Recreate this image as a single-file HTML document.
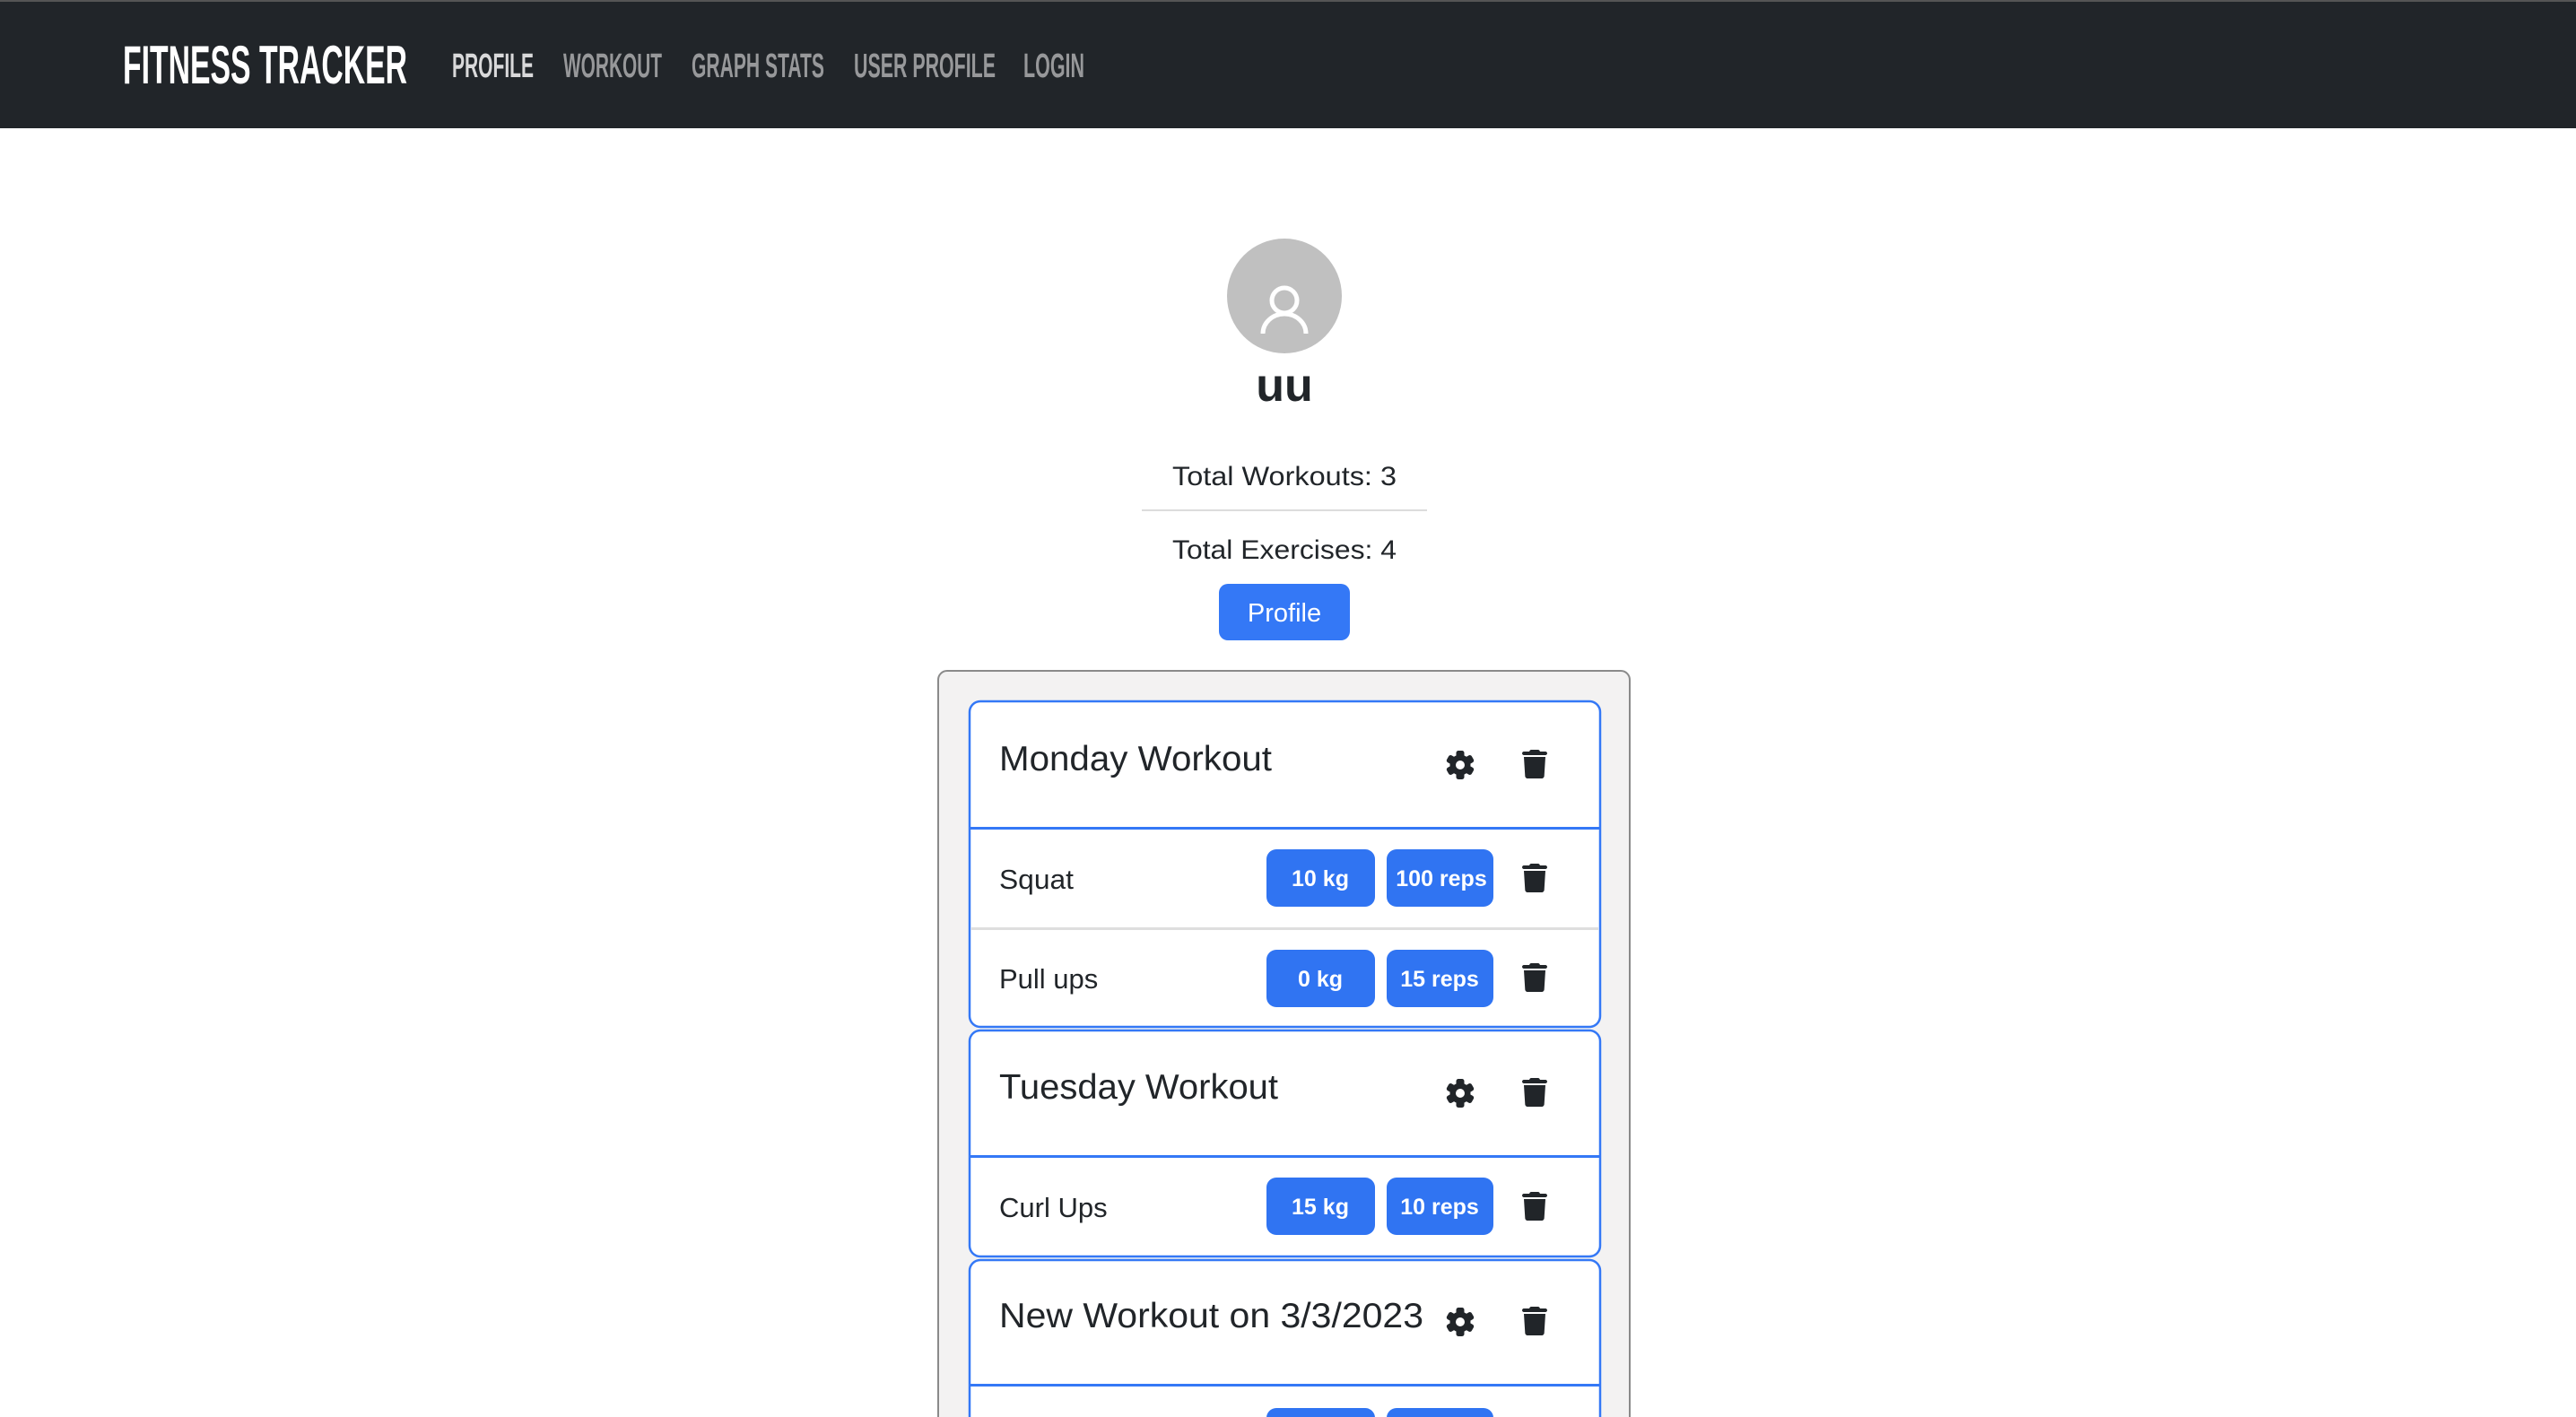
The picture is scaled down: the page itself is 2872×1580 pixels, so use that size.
<!DOCTYPE html>
<html><head><meta charset="utf-8"><style>
html,body{margin:0;padding:0;background:#fff;width:2872px;height:1580px;overflow:hidden}
svg{display:block}
text{font-family:"Liberation Sans",sans-serif}
</style></head><body>
<svg width="2872" height="1580" viewBox="0 0 2872 1580" xmlns="http://www.w3.org/2000/svg">
<defs>
<g id="trash"><path transform="scale(0.0625)" d="M135.2 17.7L128 32H32C14.3 32 0 46.3 0 64S14.3 96 32 96H416c17.7 0 32-14.3 32-32s-14.3-32-32-32H320l-7.2-14.3C307.4 6.8 296.3 0 284.2 0H163.8c-12.1 0-23.2 6.8-28.6 17.7zM416 128H32L53.2 467c1.6 25.3 22.6 45 47.9 45H346.9c25.3 0 46.3-19.7 47.9-45L416 128z" fill="#212529"/></g>
<g id="gear" fill="#212529">
<circle r="11.5"/>
<rect x="-4.5" y="-16" width="9" height="32" rx="2.5"/>
<rect x="-4.5" y="-16" width="9" height="32" rx="2.5" transform="rotate(60)"/>
<rect x="-4.5" y="-16" width="9" height="32" rx="2.5" transform="rotate(120)"/>
<circle r="5" fill="#fff"/>
</g>
</defs>
<rect x="0" y="0" width="2872" height="143" fill="#212529"/>
<rect x="0" y="0" width="2872" height="2" fill="#555"/>
<text x="137" y="93" font-size="60" font-weight="bold" fill="#fff" textLength="317" lengthAdjust="spacingAndGlyphs">FITNESS TRACKER</text>
<text x="504" y="86" font-size="38" font-weight="bold" fill="#d9d9da" textLength="91" lengthAdjust="spacingAndGlyphs">PROFILE</text>
<text x="628" y="86" font-size="38" font-weight="bold" fill="#97989a" textLength="110" lengthAdjust="spacingAndGlyphs">WORKOUT</text>
<text x="771" y="86" font-size="38" font-weight="bold" fill="#97989a" textLength="148" lengthAdjust="spacingAndGlyphs">GRAPH STATS</text>
<text x="952" y="86" font-size="38" font-weight="bold" fill="#97989a" textLength="158" lengthAdjust="spacingAndGlyphs">USER PROFILE</text>
<text x="1141" y="86" font-size="38" font-weight="bold" fill="#97989a" textLength="68" lengthAdjust="spacingAndGlyphs">LOGIN</text>
<circle cx="1432" cy="330" r="64" fill="#c0c0c0"/>
<circle cx="1432" cy="335" r="14" fill="none" stroke="#fff" stroke-width="5"/>
<path d="M1408 372 A24 22 0 0 1 1456 372" fill="none" stroke="#fff" stroke-width="5"/>
<text x="1432" y="447" font-size="52" font-weight="bold" fill="#212529" text-anchor="middle">uu</text>
<text x="1432" y="541" font-size="30" fill="#212529" text-anchor="middle" textLength="250" lengthAdjust="spacingAndGlyphs">Total Workouts: 3</text>
<rect x="1273" y="568" width="318" height="2" fill="#dcdcdc"/>
<text x="1432" y="623" font-size="30" fill="#212529" text-anchor="middle" textLength="250" lengthAdjust="spacingAndGlyphs">Total Exercises: 4</text>
<rect x="1359" y="651" width="146" height="63" rx="10" fill="#3478f6"/>
<text x="1432" y="693" font-size="29" fill="#fff" text-anchor="middle">Profile</text>
<rect x="1046" y="748" width="771" height="900" rx="10" fill="#f3f2f2" stroke="#8a8a8a" stroke-width="2"/>
<rect x="1081" y="782" width="703" height="363" rx="12" fill="#fff" stroke="#3478f6" stroke-width="2.5"/>
<rect x="1081" y="922" width="703" height="3" fill="#3478f6"/>
<text x="1114" y="859" font-size="39" fill="#212529" textLength="304" lengthAdjust="spacingAndGlyphs">Monday Workout</text>
<use href="#gear" x="1628" y="853"/>
<use href="#trash" x="1697" y="836"/>
<text x="1114" y="991" font-size="31" fill="#212529" textLength="83" lengthAdjust="spacingAndGlyphs">Squat</text>
<rect x="1412" y="947" width="121" height="64" rx="11" fill="#3074f2"/>
<rect x="1546" y="947" width="119" height="64" rx="11" fill="#3074f2"/>
<text x="1472" y="988" font-size="25" font-weight="bold" fill="#fff" text-anchor="middle">10 kg</text>
<text x="1607" y="988" font-size="25" font-weight="bold" fill="#fff" text-anchor="middle">100 reps</text>
<use href="#trash" x="1697" y="963"/>
<rect x="1083" y="1034" width="699" height="3" fill="#dedede"/>
<text x="1114" y="1102" font-size="31" fill="#212529">Pull ups</text>
<rect x="1412" y="1059" width="121" height="64" rx="11" fill="#3074f2"/>
<rect x="1546" y="1059" width="119" height="64" rx="11" fill="#3074f2"/>
<text x="1472" y="1100" font-size="25" font-weight="bold" fill="#fff" text-anchor="middle">0 kg</text>
<text x="1605" y="1100" font-size="25" font-weight="bold" fill="#fff" text-anchor="middle">15 reps</text>
<use href="#trash" x="1697" y="1074"/>
<rect x="1081" y="1149" width="703" height="252" rx="12" fill="#fff" stroke="#3478f6" stroke-width="2.5"/>
<rect x="1081" y="1288" width="703" height="3" fill="#3478f6"/>
<text x="1114" y="1225" font-size="39" fill="#212529" textLength="311" lengthAdjust="spacingAndGlyphs">Tuesday Workout</text>
<use href="#gear" x="1628" y="1219"/>
<use href="#trash" x="1697" y="1202"/>
<text x="1114" y="1357" font-size="31" fill="#212529">Curl Ups</text>
<rect x="1412" y="1313" width="121" height="64" rx="11" fill="#3074f2"/>
<rect x="1546" y="1313" width="119" height="64" rx="11" fill="#3074f2"/>
<text x="1472" y="1354" font-size="25" font-weight="bold" fill="#fff" text-anchor="middle">15 kg</text>
<text x="1605" y="1354" font-size="25" font-weight="bold" fill="#fff" text-anchor="middle">10 reps</text>
<use href="#trash" x="1697" y="1329"/>
<rect x="1081" y="1405" width="703" height="260" rx="12" fill="#fff" stroke="#3478f6" stroke-width="2.5"/>
<rect x="1081" y="1543" width="703" height="3" fill="#3478f6"/>
<text x="1114" y="1480" font-size="39" fill="#212529" textLength="473" lengthAdjust="spacingAndGlyphs">New Workout on 3/3/2023</text>
<use href="#gear" x="1628" y="1474"/>
<use href="#trash" x="1697" y="1457"/>
<rect x="1412" y="1570" width="121" height="64" rx="11" fill="#3074f2"/>
<rect x="1546" y="1570" width="119" height="64" rx="11" fill="#3074f2"/>
</svg>
</body></html>
